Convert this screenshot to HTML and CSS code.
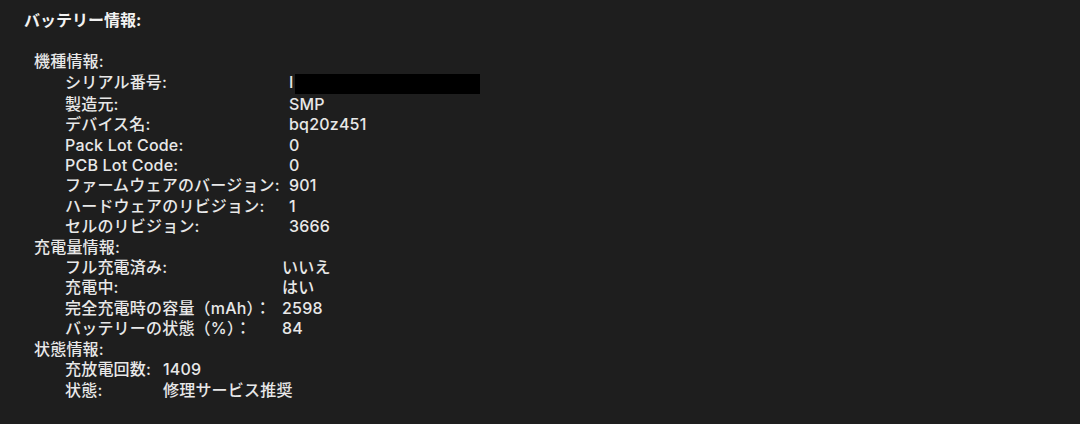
FILE: index.html
```html
<!DOCTYPE html>
<html lang="ja">
<head>
<meta charset="utf-8">
<title>バッテリー情報</title>
<link rel="stylesheet" href="styles.css">
</head>
<body>
<main class="panel">
  <h1 class="title">バッテリー情報:</h1>
  <section class="group">
    <h2 class="group-title">機種情報:</h2>
    <dl class="rows rows-model">
      <dt>シリアル番号:</dt><dd><span class="serial-char">I</span><span class="redact"></span></dd>
      <dt>製造元:</dt><dd>SMP</dd>
      <dt>デバイス名:</dt><dd>bq20z451</dd>
      <dt>Pack Lot Code:</dt><dd>0</dd>
      <dt>PCB Lot Code:</dt><dd>0</dd>
      <dt>ファームウェアのバージョン:</dt><dd>901</dd>
      <dt>ハードウェアのリビジョン:</dt><dd>1</dd>
      <dt>セルのリビジョン:</dt><dd>3666</dd>
    </dl>
  </section>
  <section class="group">
    <h2 class="group-title">充電量情報:</h2>
    <dl class="rows rows-charge">
      <dt>フル充電済み:</dt><dd>いいえ</dd>
      <dt>充電中:</dt><dd>はい</dd>
      <dt>完全充電時の容量（mAh）：</dt><dd>2598</dd>
      <dt>バッテリーの状態（%）：</dt><dd>84</dd>
    </dl>
  </section>
  <section class="group">
    <h2 class="group-title">状態情報:</h2>
    <dl class="rows rows-health">
      <dt>充放電回数:</dt><dd>1409</dd>
      <dt>状態:</dt><dd>修理サービス推奨</dd>
    </dl>
  </section>
</main>
</body>
</html>
```

FILE: styles.css
```css
html, body {
  margin: 0;
  padding: 0;
  background: #1e1e1e;
}
body {
  width: 1080px;
  height: 424px;
  overflow: hidden;
  color: #e8e8e8;
  font-family: Inter, "Noto Sans CJK JP", sans-serif;
  font-size: 16px;
  font-weight: 500;
  line-height: 20.4px;
  letter-spacing: 0.2px;
}
.panel {
  padding: 10px 0 0 24px;
}
.title {
  margin: 0 0 21px 0;
  font-size: 16px;
  line-height: 20.4px;
  font-weight: 700;
  letter-spacing: 0;
  color: #f2f2f2;
}
.group {
  padding-left: 10px;
}
.group-title {
  margin: 0;
  font-size: 16px;
  line-height: 20.4px;
  font-weight: 500;
}
.rows {
  margin: 0;
  padding-left: 31px;
  display: grid;
}
.rows dt, .rows dd {
  margin: 0;
  white-space: nowrap;
}
.rows-model { grid-template-columns: 224px auto; }
.rows-charge { grid-template-columns: 217px auto; }
.rows-health { grid-template-columns: 98px auto; }
.serial-char {
  display: inline-block;
  width: 6px;
}
.redact {
  display: inline-block;
  width: 185px;
  height: 20px;
  background: #000;
  vertical-align: -6px;
}
```
